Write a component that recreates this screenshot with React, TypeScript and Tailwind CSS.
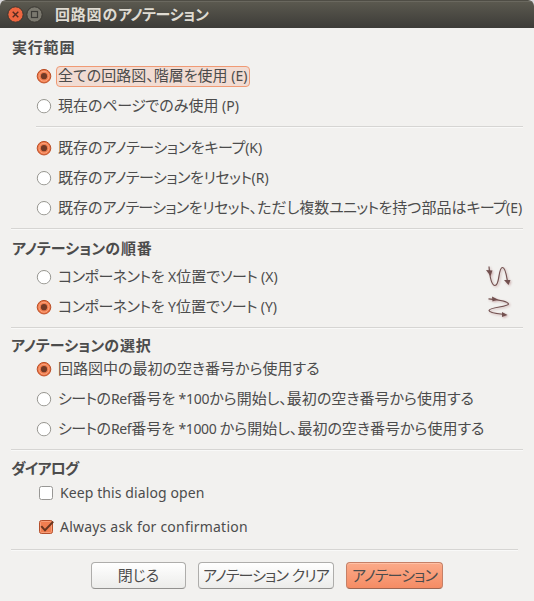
import type { ReactNode } from "react";

// Katakana, Latin and remaining glyphs each get their own spacing.
function Mixed({ text, kana, latin = "text-[14px]" }: { text: string; kana: string; latin?: string }) {
  const runs = text.match(/[ァ-ヿ]+|[\x20-\x7e]+|[^ァ-ヿ\x20-\x7e]+/g) ?? [];
  return (
    <span className="whitespace-pre">
      {runs.map((run, i) => (
        <span key={i} className={/[ァ-ヿ]/.test(run) ? kana : /[\x20-\x7e]/.test(run) ? latin : undefined}>
          {run}
        </span>
      ))}
    </span>
  );
}

function Radio({ checked }: { checked?: boolean }) {
  return (
    <svg className="h-4 w-4 shrink-0" viewBox="0 0 16 16">
      <circle cx="8" cy="8.9" r="7" fill="#ffffff" />
      {checked ? (
        <>
          <circle cx="8" cy="8.2" r="6.8" fill="#ed7442" stroke="#b9502a" strokeWidth="1" />
          <circle cx="8" cy="8.2" r="5" fill="#f07c4d" stroke="#fba581" strokeWidth="1" />
          <circle cx="8" cy="8.2" r="3.1" fill="#733a26" />
        </>
      ) : (
        <circle cx="8" cy="8.2" r="6.7" fill="#fff" stroke="#96958f" strokeWidth="1" />
      )}
    </svg>
  );
}

function Checkbox({ checked }: { checked?: boolean }) {
  return (
    <svg className="h-4 w-4 shrink-0 overflow-visible" viewBox="0 0 16 16">
      <rect x="1.5" y="1.5" width="13" height="13" rx="2" fill={checked ? "#f17e50" : "#fff"} stroke={checked ? "#b5502c" : "#989795"} />
      {checked && (
        <>
          <rect x="2.5" y="2.5" width="11" height="11" rx="1" fill="none" stroke="#f79d77" />
          <path d="M3.3 7.2 7 11.3 15.2 2.6" fill="none" stroke="#68351f" strokeWidth="2" />
        </>
      )}
    </svg>
  );
}

function RadioRow({ text, kana = "tracking-[-0.5px]", latin, checked, focused, children }: { text: string; kana?: string; latin?: string; checked?: boolean; focused?: boolean; children?: ReactNode }) {
  return (
    <label className="flex h-[30px] items-center pl-9">
      <Radio checked={checked} />
      <span
        className={`ml-1 flex h-[21px] items-center whitespace-nowrap rounded-[4px] border pb-[2px] pl-[1px] pr-[2px] ${focused ? "border-[#f09a74] bg-[#f1dcd3]" : "border-transparent"}`}
      >
        <Mixed text={text} kana={kana} latin={latin} />
      </span>
      {children}
    </label>
  );
}

function Heading({ text, kana = "tracking-[0.1px]", className }: { text: string; kana?: string; className: string }) {
  return (
    <h2 className={`flex items-center text-[15px] font-bold leading-5 tracking-[0.8px] ${className}`}>
      <Mixed text={text} kana={kana} />
    </h2>
  );
}

function Separator({ className }: { className: string }) {
  return <div className={`h-0.5 shrink-0 border-t border-[#d6d5d3] bg-[#f9f9f8] ${className}`} />;
}

function SortIcon({ horizontal }: { horizontal?: boolean }) {
  return (
    <svg className="ml-auto mr-[22px] h-7 w-7 overflow-visible [filter:drop-shadow(1px_1px_1px_#c9a9a9)]" viewBox="0 0 28 28" fill="none" stroke="#72504f" strokeWidth="1.2">
      {horizontal ? (
        <>
          <path d="M4.5 5.8C12 6.500 24 8 24.5 11c0 3-19.500 3-19.500 6.500 0 2.500 9 3.200 16 4" />
          <path d="m8 3.600 6 3-5.500 2zM18 19l5.500 3-5.500 2z" fill="#72504f" stroke="none" />
        </>
      ) : (
        <>
          <path d="M5 3.500C5.500 10 7 22.500 11 22.500c5 0 3-18 7.500-18 3 0 4 8 5 14" />
          <path d="m2 7 6.500.5-2 5.500zM20 17h6.500L24.500 22z" fill="#72504f" stroke="none" />
        </>
      )}
    </svg>
  );
}

function Button({ text, className }: { text: string; className: string }) {
  return (
    <button className={`flex h-[27px] items-center justify-center whitespace-nowrap rounded-[4px] border pb-[1px] ${className}`}>
      <Mixed text={text} kana="tracking-[-0.85px]" />
    </button>
  );
}

export default function App() {
  return (
    <div className="bg-[#d9d8dc]">
      <div className="flex h-[601px] w-[534px] flex-col overflow-hidden rounded-t-[6px] bg-[#f2f1ef] text-[15px] leading-5 text-[#4c4c4c] [font-family:'Noto_Sans','Noto_Sans_CJK_JP',sans-serif] [font-feature-settings:'palt']">
        <header className="flex h-7 shrink-0 items-center border-t border-[#4f4d45] bg-linear-to-b from-[#5c5a50] to-[#3d3c38] pl-[7px] shadow-[inset_0_1px_0_#6a685f]">
          <svg className="h-[17px] w-9" viewBox="0 0 36 17">
            <circle cx="8.500" cy="8.500" r="7.700" fill="#ee6640" stroke="#393731" />
            <path d="m5.700 5.700 5.600 5.600m0-5.600-5.600 5.600" stroke="#542b20" strokeWidth="1.400" />
            <circle cx="27.500" cy="8.500" r="7.700" fill="#7b796f" stroke="#393731" />
            <rect x="24.500" y="5.500" width="6" height="6" fill="none" stroke="#3c3b37" strokeWidth="1.200" />
          </svg>
          <h1 className="ml-3 pb-[2px] text-[15px] font-bold tracking-[0.8px] text-[#dfdbd2]">
            <Mixed text="回路図のアノテーション" kana="tracking-[-0.3px]" />
          </h1>
        </header>

        <Heading text="実行範囲" className="h-[33px] pl-3 pt-[5px]" />
        <RadioRow text="全ての回路図、階層を使用 (E)" checked focused />
        <RadioRow text="現在のページでのみ使用 (P)" />
        <Separator className="ml-9 mr-[11px] mt-[5px]" />
        <div className="mt-[5px]">
          <RadioRow text="既存のアノテーションをキープ(K)" kana="tracking-[-0.38px]" checked />
          <RadioRow text="既存のアノテーションをリセット(R)" />
          <RadioRow text="既存のアノテーションをリセット、ただし複数ユニットを持つ部品はキープ(E)" kana="tracking-[-0.68px]" />
        </div>
        <Separator className="ml-[11px] mr-[11px] mt-[5px]" />

        <Heading text="アノテーションの順番" className="h-8 pl-3 pt-[3px]" />
        <RadioRow text="コンポーネントを X位置でソート (X)">
          <SortIcon />
        </RadioRow>
        <RadioRow text="コンポーネントを Y位置でソート (Y)" checked>
          <SortIcon horizontal />
        </RadioRow>
        <Separator className="ml-[11px] mr-[11px] mt-[5px]" />

        <Heading text="アノテーションの選択" className="h-[25px] pl-[11px] pt-[7px]" />
        <RadioRow text="回路図中の最初の空き番号から使用する" checked />
        <RadioRow text="シートのRef番号を *100から開始し、最初の空き番号から使用する" kana="tracking-[-0.6px]" latin="text-[14px] tracking-[-0.3px]" />
        <RadioRow text="シートのRef番号を *1000 から開始し、最初の空き番号から使用する" kana="tracking-[-0.6px]" latin="text-[14px] tracking-[-0.35px]" />
        <Separator className="ml-[11px] mr-[11px] mt-[5px]" />

        <Heading text="ダイアログ" kana="tracking-[-0.8px]" className="h-[25px] pl-[11px] pt-[8px]" />
        <label className="flex h-[34px] items-center gap-[6px] pl-[38px] text-[14px]">
          <Checkbox />
          <span className="tracking-[0.1px]">Keep this dialog open</span>
        </label>
        <label className="flex h-[34px] items-center gap-[6px] pl-[38px] text-[14px]">
          <Checkbox checked />
          <span className="tracking-[0.21px]">Always ask for confirmation</span>
        </label>
        <Separator className="ml-[11px] mr-4 mt-[5px]" />

        <footer className="mt-[11px] flex gap-3 pl-[91px]">
          <Button text="閉じる" className="w-[95px] border-[#aeadab] border-b-[#92918f] bg-linear-to-b from-white to-[#ececea]" />
          <Button text="アノテーション クリア" className="w-[136px] border-[#aeadab] border-b-[#92918f] bg-linear-to-b from-white to-[#ececea]" />
          <Button text="アノテーション" className="w-[97px] border-[#c58067] border-b-[#9c6652] bg-linear-to-b from-[#fbaa89] to-[#f58c64] shadow-[inset_0_1px_0_#ffc0a5]" />
        </footer>
      </div>
    </div>
  );
}
